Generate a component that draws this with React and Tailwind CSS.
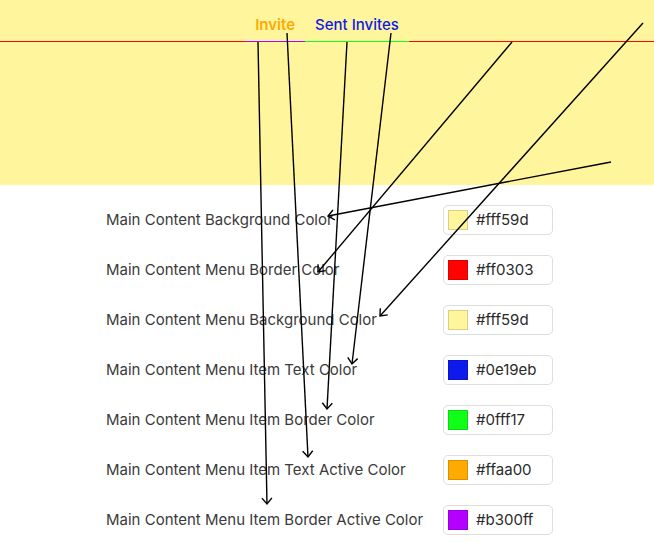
import React from "react";

const rows = [
  { label: "Main Content Background Color", value: "#fff59d" },
  { label: "Main Content Menu Border Color", value: "#ff0303" },
  { label: "Main Content Menu Background Color", value: "#fff59d" },
  { label: "Main Content Menu Item Text Color", value: "#0e19eb" },
  { label: "Main Content Menu Item Border Color", value: "#0fff17" },
  { label: "Main Content Menu Item Text Active Color", value: "#ffaa00" },
  { label: "Main Content Menu Item Border Active Color", value: "#b300ff" },
];

// pointer lines from the preview to each setting
const arrows = [
  [258, 42, 267, 504],
  [287, 33, 308, 457],
  [347, 42, 327, 409],
  [391, 33, 352, 364],
  [512, 42, 318, 272],
  [643, 23, 380, 316],
  [611, 162, 328, 216],
];

function Swatch({ value }) {
  return (
    <div className="flex h-[30px] w-[110px] items-center rounded-[5px] border border-[#dedede] bg-white pl-[4px]">
      <span
        className="h-[20px] w-[20px] border border-black/15"
        style={{ backgroundColor: value }}
      />
      <span className="ml-[8px] text-[15px] text-[#2a2a2a]">{value}</span>
    </div>
  );
}

export default function App() {
  return (
    <div className="relative min-h-[542px] bg-white font-['Inter',sans-serif]">
      <div className="h-[185px] bg-[#fff59d]">
        <div className="flex justify-center border-b border-[#ff0303]">
          <div className="-mb-px border-b border-[#b300ff] px-[10px] pt-[14px] pb-[5px] text-[15px] leading-[22px] font-semibold text-[#ffaa00]">
            Invite
          </div>
          <div className="-mb-px border-b border-[#0fff17] px-[10px] pt-[14px] pb-[5px] text-[15px] leading-[22px] font-medium text-[#0e19eb]">
            Sent Invites
          </div>
        </div>
      </div>

      <div className="ml-[106px] flex w-[447px] flex-col gap-[20px] pt-[20px]">
        {rows.map((row) => (
          <div key={row.label} className="flex h-[30px] items-center justify-between">
            <span className="text-[15px] text-[#3a3a3a]">{row.label}</span>
            <Swatch value={row.value} />
          </div>
        ))}
      </div>

      <svg className="pointer-events-none absolute inset-0" width="654" height="542">
        <defs>
          <marker
            id="head"
            markerWidth="12"
            markerHeight="12"
            refX="7"
            refY="6"
            orient="auto"
            markerUnits="userSpaceOnUse"
          >
            <path d="M1,1 L7,6 L1,11" fill="none" stroke="#000" strokeWidth="1.4" />
          </marker>
        </defs>
        {arrows.map(([x1, y1, x2, y2], i) => (
          <line
            key={i}
            x1={x1}
            y1={y1}
            x2={x2}
            y2={y2}
            stroke="#000"
            strokeWidth="1.4"
            markerEnd="url(#head)"
          />
        ))}
      </svg>
    </div>
  );
}
